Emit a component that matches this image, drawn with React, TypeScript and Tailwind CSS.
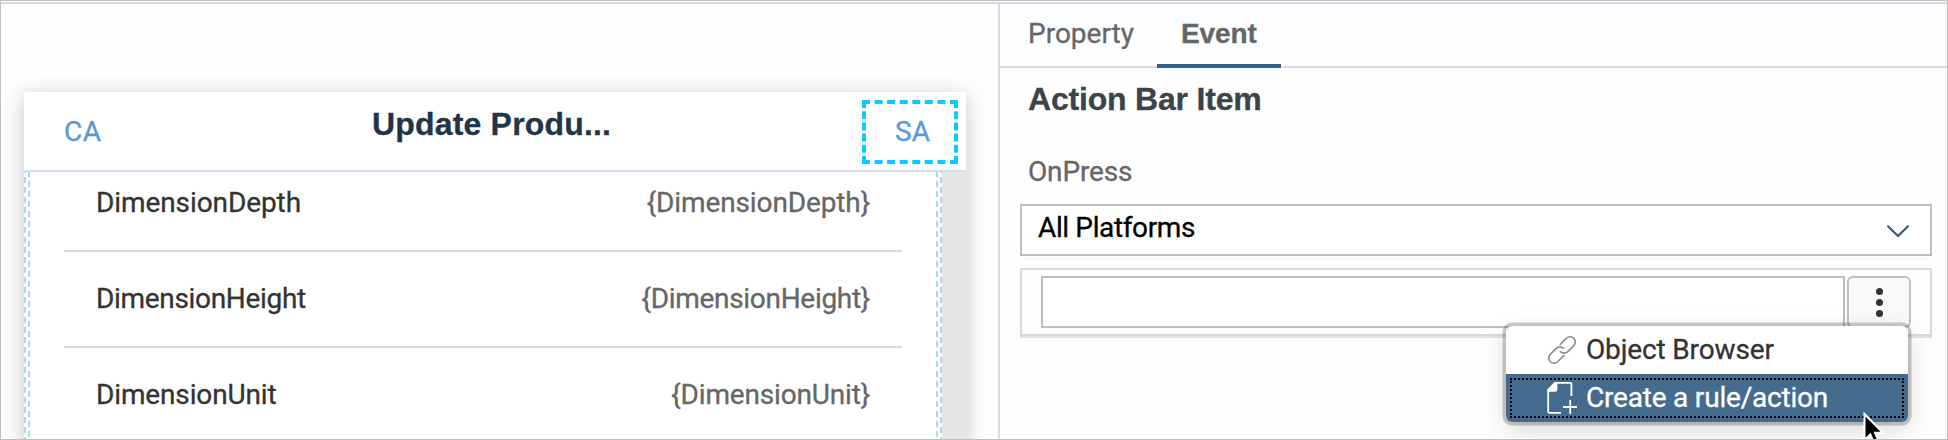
import type { ReactNode } from 'react';

const fields = [
  { label: 'DimensionDepth', labelClass: 'tracking-[-0.09px]', value: '{DimensionDepth}', valueClass: 'tracking-[-0.12px]' },
  { label: 'DimensionHeight', labelClass: 'tracking-[-0.32px]', value: '{DimensionHeight}', valueClass: 'tracking-[-0.3px]' },
  { label: 'DimensionUnit', labelClass: 'tracking-[-0.14px]', value: '{DimensionUnit}', valueClass: 'tracking-[-0.17px]' },
];

/* Selection guides: two dashed strands, the second shifted by 4px. */
const outerStrand =
  'w-[2px] bg-[repeating-linear-gradient(to_bottom,#add8e6_0px,#add8e6_1px,transparent_1px,transparent_5px,#add8e6_5px,#add8e6_10px)]';
const innerStrand =
  'w-[2px] bg-[repeating-linear-gradient(to_bottom,#add8e6_0px,#add8e6_5px,transparent_5px,transparent_9px,#add8e6_9px,#add8e6_10px)]';

function DevicePreview() {
  return (
    <div className="flex h-[360px] w-[942px] flex-col bg-white shadow-[0_4px_20px_rgba(0,0,0,0.22)]">
      <div className="flex h-20 shrink-0 items-start border-b-2 border-[#d1dfee] bg-white pr-2 pl-10">
        <div className="w-[308px] pt-[23px] tracking-[0.6px] text-[#5899da]">CA</div>
        <div className="pt-[13px] font-['Liberation_Sans'] text-[32px] leading-[38px] font-bold tracking-[0.18px] text-[#223548]">
          Update Produ...
        </div>
        <div className="mt-2 ml-auto h-16 w-24 border-4 border-dashed border-[#0acbff] pt-[11px] pl-[29px] text-[#5899da]">SA</div>
      </div>
      <div className="flex min-h-0 flex-1 overflow-hidden bg-[#e6e6e6]">
        <div className="flex w-[918px] bg-white">
          <div className="flex gap-[2px]">
            <div className={outerStrand} />
            <div className={innerStrand} />
          </div>
          <div className="-mt-4 flex-1 pr-[34px] pl-[34px]">
            {fields.map((f) => (
              <div key={f.label} className="flex h-24 items-start justify-between border-b-2 border-[#d9d9d9] px-8 pt-[30px]">
                <span className={`text-[#333333] ${f.labelClass}`}>{f.label}</span>
                <span className={`text-[#666666] ${f.valueClass}`}>{f.value}</span>
              </div>
            ))}
          </div>
          <div className="flex gap-[2px]">
            <div className={innerStrand} />
            <div className={outerStrand} />
          </div>
        </div>
      </div>
    </div>
  );
}

function LinkIcon() {
  return (
    <svg width="32" height="32" viewBox="-16 -16 32 32" fill="none" stroke="#8c8c8c" strokeWidth="1.7" strokeLinecap="round">
      <g transform="rotate(-45)">
        <path d="M2.6 -5.2H11.4A5.2 5.2 0 0 1 11.4 5.2H3A5.2 5.2 0 0 1 -2.2 0" />
        <path d="M-2.6 5.2H-11.4A5.2 5.2 0 0 1 -11.4 -5.2H-3A5.2 5.2 0 0 1 2.2 0" />
      </g>
    </svg>
  );
}

function NewDocumentIcon() {
  return (
    <svg width="32" height="34" viewBox="0 0 32 34" fill="none" stroke="#ffffff" strokeWidth="1.8">
      <path d="M25.4 15V3.2Q25.4 1.9 24.1 1.9H9L2.2 8.8V30.6Q2.2 31.9 3.5 31.9H15" />
      <path d="M1.6 8.6L8.8 1.3H11.4V8.4Q11.4 10.8 9 10.8H1.6Z" fill="#ffffff" stroke="none" />
      <path d="M17 26H31M24.2 19V33" />
    </svg>
  );
}

function MenuItem({ icon, children, className }: { icon: ReactNode; children: ReactNode; className: string }) {
  return (
    <div className={`flex h-12 items-start ${className}`}>
      <div className="flex h-12 w-20 shrink-0 items-center pl-10">{icon}</div>
      <div className="pt-[7px] whitespace-nowrap">{children}</div>
    </div>
  );
}

function EventPanel() {
  return (
    <div className="flex-1 border-l-2 border-[#dbdae2] bg-[#fefefe]">
      <div className="flex h-16 items-start border-b-2 border-[#dbdbe0] bg-[#fcfdff] pl-7 text-[#666666]">
        <div className="w-[129px] pt-[13px]">Property</div>
        <div className="h-16 w-[124px] shrink-0 border-b-4 border-[#346187] pt-[13px] pl-6 font-['Liberation_Sans'] font-bold tracking-[-0.1px]">
          Event
        </div>
      </div>
      <div className="pt-3 pr-[15px] pl-5">
        <h2 className="pl-2 font-['Liberation_Sans'] text-[32px] leading-[38px] font-bold tracking-[-0.2px] text-[#3b4448]">
          Action Bar Item
        </h2>
        <div className="mt-[37px] mb-4 pl-2 tracking-[-0.15px] text-[#666666]">OnPress</div>
        <div className="flex h-[52px] items-start justify-between border-2 border-[#bfbfbf] bg-white pr-5 pl-4">
          <span className="pt-[5px] tracking-[-0.37px] text-black">All Platforms</span>
          <svg className="mt-[18px]" width="24" height="14" viewBox="0 0 24 14" fill="none" stroke="#2f5475" strokeWidth="2" strokeLinecap="round" strokeLinejoin="round">
            <path d="M2 2.2L12 12L22 2.2" />
          </svg>
        </div>
        <div className="mt-[2px] mb-2 h-[2px] bg-[#f7f7f7]" />
        <div className="h-[70px] border-2 border-[#d9d9d9] border-b-[#e3e3e3]">
          <div className="flex h-[66px] gap-[2px] border-b-2 border-[#d9d9d9] pt-[6px] pl-[19px]">
            <div className="h-[52px] w-[804px] border-2 border-[#bfbfbf] bg-white" />
            <div className="flex h-[52px] w-16 flex-col items-center gap-[4px] rounded-md border-2 border-[#bfbfbf] bg-[#f8faf9] pt-[10px]">
              <span className="size-[7px] rounded-full bg-[#333333]" />
              <span className="size-[7px] rounded-full bg-[#333333]" />
              <span className="size-[7px] rounded-full bg-[#333333]" />
            </div>
          </div>
        </div>
      </div>
    </div>
  );
}

export default function App() {
  return (
    <div className="relative h-[440px] w-[1948px] overflow-hidden border border-[#bfbfbf] bg-[#fefefe] pt-px font-['Roboto','Liberation_Sans',sans-serif] text-[28px] leading-[33px]">
      <div className="flex h-[437px] flex-col border-t-2 border-[#dbdae2] [-webkit-text-stroke:0.3px]">
        <div className="flex min-h-0 flex-1">
          <div className="w-[997px] shrink-0 overflow-hidden pt-[88px] pl-[23px]">
            <DevicePreview />
          </div>
          <EventPanel />
        </div>
      </div>

      <div className="absolute top-[325px] left-[1505px] w-[402px] rounded-[6px] bg-white shadow-[0_0_0_3.5px_rgba(0,0,0,0.2),0_8px_26px_rgba(0,0,0,0.15)] [-webkit-text-stroke:0.3px]">
        <MenuItem icon={<LinkIcon />} className="rounded-t-[6px] tracking-[-0.14px] text-[#333333]">
          Object Browser
        </MenuItem>
        <div className="relative">
          <MenuItem icon={<NewDocumentIcon />} className="rounded-b-[6px] bg-[#446b8e] tracking-[-0.2px] text-white">
            Create a rule/action
          </MenuItem>
          <div className="pointer-events-none absolute inset-1 border-2 border-dotted border-black" />
        </div>
      </div>

      <svg className="absolute top-[409px] left-[1860px]" width="30" height="38" viewBox="0 0 30 38">
        <path d="M3.5 4V30L9.3 24.4L13.6 34.4L18.2 32.4L14 22.8H22Z" fill="#000000" stroke="#ffffff" strokeWidth="2" strokeLinejoin="miter" />
      </svg>
    </div>
  );
}
